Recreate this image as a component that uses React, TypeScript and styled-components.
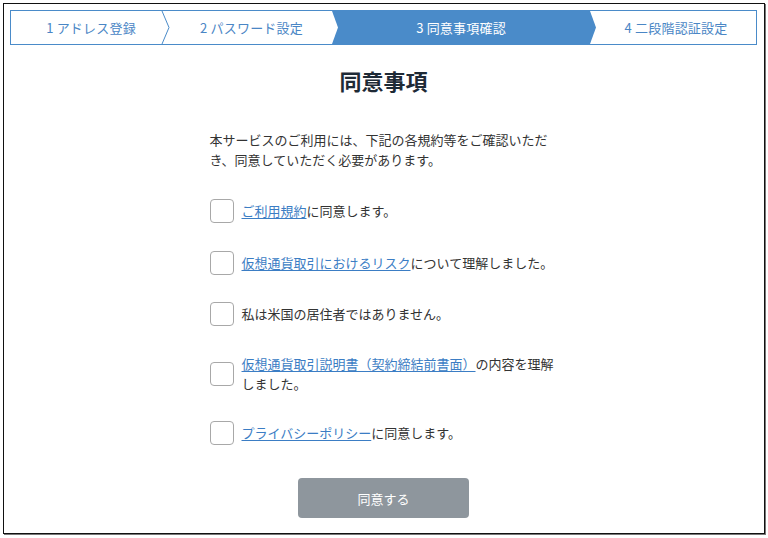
import React from "react";
import styled, { createGlobalStyle } from "styled-components";

const GlobalStyle = createGlobalStyle`
  html, body {
    margin: 0;
    padding: 0;
    background: #ffffff;
  }
  body {
    font-family: "Noto Sans CJK JP", "Noto Sans", sans-serif;
    color: #333333;
  }
`;

const BLUE = "#4a8bc9";

const Frame = styled.div`
  margin: 3px;
  width: 762px;
  height: 531px;
  box-sizing: border-box;
  border: 1px solid #111111;
  box-shadow: 1px 1px 0 #777777;
  background: #ffffff;
  padding: 6px 7px 0 6px;
  display: flex;
  flex-direction: column;
`;

const Stepper = styled.div`
  display: flex;
  height: 35px;
  box-sizing: border-box;
  border: 1px solid ${BLUE};
  background: #ffffff;
`;

const Step = styled.div<{ $width: number; $active?: boolean; $offset?: number }>`
  position: relative;
  flex: 0 0 ${(p) => p.$width}px;
  display: flex;
  align-items: center;
  justify-content: center;
  padding-left: ${(p) => p.$offset ?? 6}px;
  box-sizing: border-box;
  font-size: 13px;
  line-height: 1;
  letter-spacing: 0.2px;
  color: ${(p) => (p.$active ? "#ffffff" : "#4a86c5")};
  background: ${(p) => (p.$active ? BLUE : "transparent")};
`;

const Chevron = styled.svg`
  position: absolute;
  top: 0;
  left: 100%;
  margin-left: -1px;
  width: 9px;
  height: 100%;
  overflow: visible;
  z-index: 1;
`;

const Title = styled.h1`
  margin: 20px 0 0;
  text-align: center;
  font-size: 22px;
  line-height: 30px;
  font-weight: 700;
  color: #1e2a36;
`;

const Content = styled.div`
  width: 348px;
  margin: 35px auto 0;
  display: flex;
  flex-direction: column;
`;

const Lead = styled.p`
  margin: 0 0 29px;
  font-size: 13px;
  line-height: 20px;
  color: #333333;
`;

const Checks = styled.div`
  display: flex;
  flex-direction: column;
  gap: 27.5px;
`;

const Row = styled.label`
  display: flex;
  align-items: center;
  gap: 8px;
  min-height: 24px;
`;

const Box = styled.span`
  flex: 0 0 24px;
  width: 24px;
  height: 24px;
  box-sizing: border-box;
  border: 1.5px solid #a8a8a8;
  border-radius: 4px;
  background: #ffffff;
`;

const RowText = styled.span`
  font-size: 13px;
  line-height: 20px;
  color: #333333;
`;

const Link = styled.a`
  color: #3b7dc4;
  text-decoration: underline;
  text-underline-offset: 2px;
`;

const Submit = styled.button`
  align-self: center;
  margin-top: 33px;
  width: 171px;
  height: 40px;
  border: none;
  border-radius: 4px;
  background: #8e969d;
  color: #ffffff;
  font-family: "Noto Sans CJK JP", "Noto Sans", sans-serif;
  font-size: 13px;
  cursor: default;
`;

type ChevronKind = "line" | "white" | "blue";

const StepChevron = ({ kind }: { kind: ChevronKind }) => (
  <Chevron viewBox="0 0 9 33" preserveAspectRatio="none">
    {kind === "line" && (
      <polyline points="0,0 7,16.5 0,33" fill="#ffffff" stroke={BLUE} strokeWidth="1" />
    )}
    {kind === "white" && <polygon points="0,0 1,0 7,16.5 1,33 0,33" fill="#ffffff" />}
    {kind === "blue" && <polygon points="0,0 1,0 7,16.5 1,33 0,33" fill={BLUE} />}
  </Chevron>
);

const steps: { label: string; width: number; active?: boolean; chevron?: ChevronKind; offset?: number }[] = [
  { label: "1 アドレス登録", width: 152, chevron: "line", offset: 8 },
  { label: "2 パスワード設定", width: 169, chevron: "white", offset: 8 },
  { label: "3 同意事項確認", width: 258, active: true, chevron: "blue", offset: 0 },
  { label: "4 二段階認証設定", width: 166, offset: 6 },
];

export default function App() {
  return (
    <>
      <GlobalStyle />
      <Frame>
        <Stepper>
          {steps.map((s) => (
            <Step key={s.label} $width={s.width} $active={s.active} $offset={s.offset}>
              {s.label}
              {s.chevron && <StepChevron kind={s.chevron} />}
            </Step>
          ))}
        </Stepper>
        <Title>同意事項</Title>
        <Content>
          <Lead>
            本サービスのご利用には、下記の各規約等をご確認いただき、同意していただく必要があります。
          </Lead>
          <Checks>
            <Row>
              <Box />
              <RowText>
                <Link>ご利用規約</Link>に同意します。
              </RowText>
            </Row>
            <Row>
              <Box />
              <RowText>
                <Link>仮想通貨取引におけるリスク</Link>について理解しました。
              </RowText>
            </Row>
            <Row>
              <Box />
              <RowText>私は米国の居住者ではありません。</RowText>
            </Row>
            <Row>
              <Box />
              <RowText>
                <Link>仮想通貨取引説明書（契約締結前書面）</Link>の内容を理解しました。
              </RowText>
            </Row>
            <Row>
              <Box />
              <RowText>
                <Link>プライバシーポリシー</Link>に同意します。
              </RowText>
            </Row>
          </Checks>
          <Submit type="button">同意する</Submit>
        </Content>
      </Frame>
    </>
  );
}
